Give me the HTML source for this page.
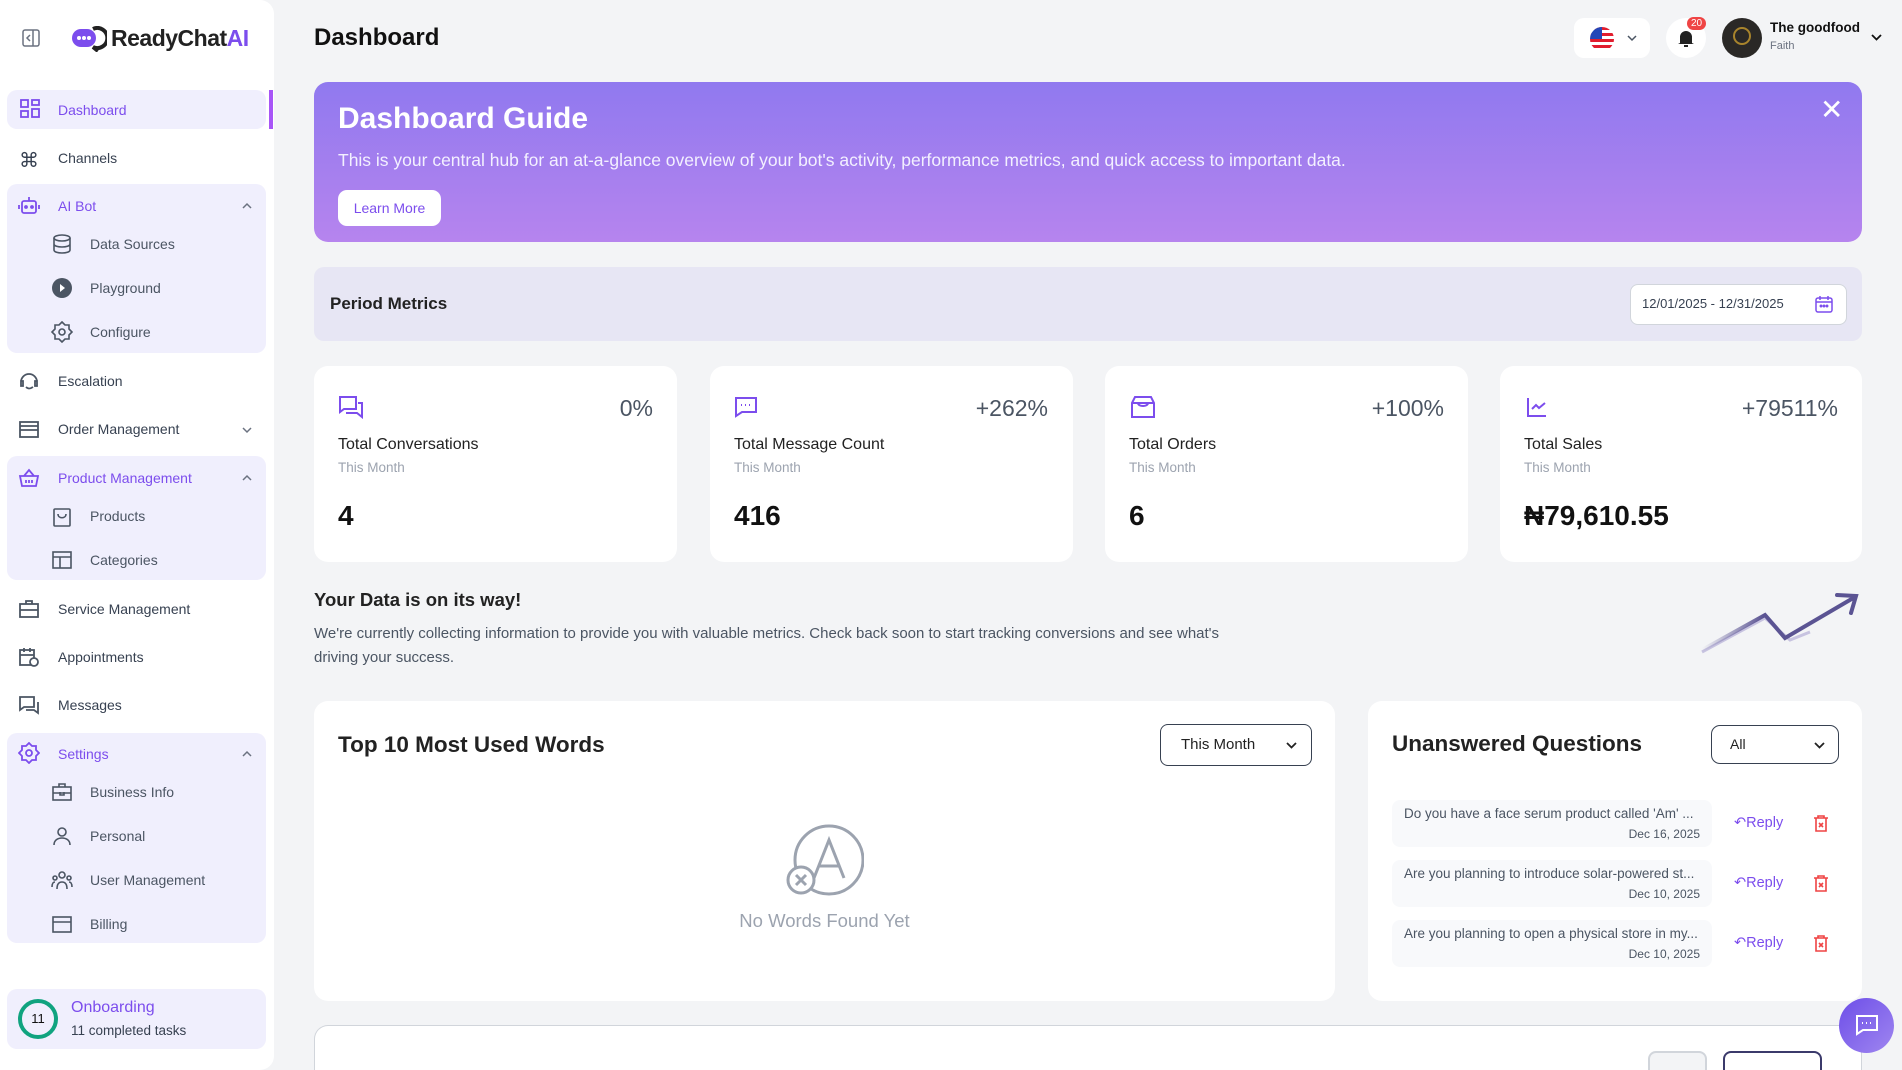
<!DOCTYPE html>
<html><head><meta charset="utf-8"><style>
*{box-sizing:border-box;margin:0;padding:0}
html{width:1902px;height:1070px;overflow:hidden}
body{width:1902px;height:1070px;overflow:hidden;background:#f3f4f6;font-family:"Liberation Sans",sans-serif;color:#1f2937;position:relative}
.a{position:absolute}
.sb{left:0;top:0;width:274px;height:1070px;background:#fff;border-radius:0 14px 14px 0}
.grp{left:7px;width:259px;background:#f0effd;border-radius:10px}
.it{left:58px;font-size:14px;color:#374151;transform:translateY(-50%)}
.sub{left:90px;font-size:14px;color:#4b5563;transform:translateY(-50%)}
.ic{width:22px;height:22px;transform:translateY(-50%)}
.pur{color:#7c4ded}
.card{background:#fff;border-radius:14px}
</style></head><body>
<div class="a sb"></div>
<!-- logo -->
<svg class="a" style="left:22px;top:29px" width="18" height="18" viewBox="0 0 18 18"><rect x="1" y="1" width="16" height="16" rx="2" fill="none" stroke="#6b7280" stroke-width="1.5"/><line x1="11" y1="1" x2="11" y2="17" stroke="#6b7280" stroke-width="1.5"/><path d="M8 6l-3 3 3 3" fill="none" stroke="#6b7280" stroke-width="1.5"/></svg>
<svg class="a" style="left:71px;top:26px" width="36" height="26" viewBox="0 0 36 26"><path d="M22 3a10 10 0 1 1 0 18l5 4" fill="none" stroke="#222" stroke-width="4"/><rect x="1" y="3" width="24" height="18" rx="9" fill="#7c4ded"/><circle cx="8" cy="12" r="2" fill="#fff"/><circle cx="13" cy="12" r="2" fill="#fff"/><circle cx="18" cy="12" r="2" fill="#fff"/></svg>
<div class="a" style="left:111px;top:25px;font-size:23px;font-weight:bold;color:#222;letter-spacing:-0.5px">ReadyChat<span style="color:#7c4ded">AI</span></div>
<!-- nav -->
<div class="a grp" style="top:90px;height:39px"></div>
<div class="a" style="left:269px;top:90px;width:4px;height:39px;background:#a855f7"></div>
<div class="a grp" style="top:184px;height:169px"></div>
<div class="a grp" style="top:456px;height:124px"></div>
<div class="a grp" style="top:733px;height:210px"></div>
<svg class="a ic" style="left:19px;top:109px" viewBox="0 0 22 22" fill="none" stroke="#7c4ded" stroke-width="1.8"><rect x="2" y="2" width="7" height="7"/><rect x="13" y="2" width="7" height="5"/><rect x="2" y="13" width="7" height="6"/><rect x="13" y="11" width="7" height="8"/></svg>
<div class="a it pur" style="top:110px">Dashboard</div>
<div class="a" style="left:19px;top:148px;font-size:20px;color:#374151">⌘</div>
<div class="a it" style="top:158px">Channels</div>
<svg class="a ic" style="left:18px;top:206px" viewBox="0 0 22 22" fill="none" stroke="#7c4ded" stroke-width="1.8"><rect x="4" y="6" width="14" height="12" rx="2"/><line x1="11" y1="2" x2="11" y2="6"/><line x1="1" y1="10" x2="1" y2="14"/><line x1="21" y1="10" x2="21" y2="14"/><circle cx="8" cy="12" r="1"/><circle cx="14" cy="12" r="1"/></svg>
<div class="a it pur" style="top:206px">AI Bot</div>
<svg class="a" style="left:241px;top:201px" width="12" height="10" viewBox="0 0 12 10"><path d="M2 7l4-4 4 4" fill="none" stroke="#6b7280" stroke-width="1.5"/></svg>
<svg class="a ic" style="left:51px;top:244px" viewBox="0 0 22 22" fill="none" stroke="#4b5563" stroke-width="1.6"><ellipse cx="11" cy="5" rx="8" ry="3"/><path d="M3 5v12c0 2 4 3 8 3s8-1 8-3V5M3 11c0 2 4 3 8 3s8-1 8-3"/></svg>
<div class="a sub" style="top:244px">Data Sources</div>
<svg class="a ic" style="left:51px;top:288px" viewBox="0 0 22 22"><circle cx="11" cy="11" r="10" fill="#4b5563"/><path d="M9 7l5 4-5 4z" fill="#fff"/></svg>
<div class="a sub" style="top:288px">Playground</div>
<svg class="a ic" style="left:51px;top:332px" viewBox="0 0 22 22" fill="none" stroke="#4b5563" stroke-width="1.6"><circle cx="11" cy="11" r="3"/><path d="M11 1l3 3h4v4l3 3-3 3v4h-4l-3 3-3-3H4v-4l-3-3 3-3V4h4z"/></svg>
<div class="a sub" style="top:332px">Configure</div>
<svg class="a ic" style="left:18px;top:381px" viewBox="0 0 22 22" fill="none" stroke="#4b5563" stroke-width="1.8"><path d="M3 12a8 8 0 0 1 16 0M3 11h2v5H3zM17 11h2v5h-2zM8 17c2 2 4 2 7 0"/></svg>
<div class="a it" style="top:381px">Escalation</div>
<svg class="a ic" style="left:18px;top:429px" viewBox="0 0 22 22" fill="none" stroke="#4b5563" stroke-width="1.8"><rect x="2" y="4" width="18" height="15"/><line x1="2" y1="8" x2="20" y2="8"/><line x1="2" y1="12" x2="20" y2="12"/></svg>
<div class="a it" style="top:429px">Order Management</div>
<svg class="a" style="left:241px;top:425px" width="12" height="10" viewBox="0 0 12 10"><path d="M2 3l4 4 4-4" fill="none" stroke="#6b7280" stroke-width="1.5"/></svg>
<svg class="a ic" style="left:18px;top:478px" viewBox="0 0 22 22" fill="none" stroke="#7c4ded" stroke-width="1.8"><path d="M2 9h18l-2 10H4zM6 9l5-6 5 6M8 13v3M11 13v3M14 13v3"/></svg>
<div class="a it pur" style="top:478px">Product Management</div>
<svg class="a" style="left:241px;top:473px" width="12" height="10" viewBox="0 0 12 10"><path d="M2 7l4-4 4 4" fill="none" stroke="#6b7280" stroke-width="1.5"/></svg>
<svg class="a ic" style="left:51px;top:517px" viewBox="0 0 22 22" fill="none" stroke="#4b5563" stroke-width="1.6"><rect x="3" y="3" width="16" height="17" rx="1"/><path d="M7 8c0 5 8 5 8 0"/></svg>
<div class="a sub" style="top:516px">Products</div>
<svg class="a ic" style="left:51px;top:560px" viewBox="0 0 22 22" fill="none" stroke="#4b5563" stroke-width="1.6"><rect x="2" y="3" width="18" height="16"/><line x1="2" y1="8" x2="20" y2="8"/><line x1="9" y1="8" x2="9" y2="19"/></svg>
<div class="a sub" style="top:560px">Categories</div>
<svg class="a ic" style="left:18px;top:609px" viewBox="0 0 22 22" fill="none" stroke="#4b5563" stroke-width="1.8"><rect x="2" y="6" width="18" height="13"/><path d="M8 6V3h6v3M2 12h18"/></svg>
<div class="a it" style="top:609px">Service Management</div>
<svg class="a ic" style="left:18px;top:657px" viewBox="0 0 22 22" fill="none" stroke="#4b5563" stroke-width="1.8"><rect x="2" y="4" width="14" height="15"/><path d="M6 2v4M12 2v4M2 9h14"/><circle cx="16" cy="16" r="4" fill="#fff"/></svg>
<div class="a it" style="top:657px">Appointments</div>
<svg class="a ic" style="left:18px;top:705px" viewBox="0 0 22 22" fill="none" stroke="#4b5563" stroke-width="1.8"><path d="M2 3h14v10H6l-4 3zM8 16h8l4 3V8"/></svg>
<div class="a it" style="top:705px">Messages</div>
<svg class="a ic" style="left:18px;top:753px" viewBox="0 0 22 22" fill="none" stroke="#7c4ded" stroke-width="1.8"><circle cx="11" cy="11" r="3"/><path d="M11 1l3 3h4v4l3 3-3 3v4h-4l-3 3-3-3H4v-4l-3-3 3-3V4h4z"/></svg>
<div class="a it pur" style="top:754px">Settings</div>
<svg class="a" style="left:241px;top:749px" width="12" height="10" viewBox="0 0 12 10"><path d="M2 7l4-4 4 4" fill="none" stroke="#6b7280" stroke-width="1.5"/></svg>
<svg class="a ic" style="left:51px;top:792px" viewBox="0 0 22 22" fill="none" stroke="#4b5563" stroke-width="1.6"><rect x="2" y="6" width="18" height="13"/><path d="M8 6V3h6v3M2 12h18M9 11v3h4v-3"/></svg>
<div class="a sub" style="top:792px">Business Info</div>
<svg class="a ic" style="left:51px;top:836px" viewBox="0 0 22 22" fill="none" stroke="#4b5563" stroke-width="1.6"><circle cx="11" cy="7" r="4"/><path d="M3 20c0-5 4-7 8-7s8 2 8 7"/></svg>
<div class="a sub" style="top:836px">Personal</div>
<svg class="a ic" style="left:51px;top:880px" viewBox="0 0 22 22" fill="none" stroke="#4b5563" stroke-width="1.6"><circle cx="11" cy="6" r="3"/><circle cx="4" cy="9" r="2"/><circle cx="18" cy="9" r="2"/><path d="M6 20c0-5 2-7 5-7s5 2 5 7M1 18c0-3 1-5 3-5M21 18c0-3-1-5-3-5"/></svg>
<div class="a sub" style="top:880px">User Management</div>
<svg class="a ic" style="left:51px;top:924px" viewBox="0 0 22 22" fill="none" stroke="#4b5563" stroke-width="1.6"><rect x="2" y="4" width="18" height="15"/><line x1="2" y1="9" x2="20" y2="9"/></svg>
<div class="a sub" style="top:924px">Billing</div>
<div class="a grp" style="top:989px;height:60px"></div>
<div class="a" style="left:18px;top:999px;width:40px;height:40px;border-radius:50%;border:4px solid #10a37f;font-size:13px;text-align:center;line-height:32px;color:#111">11</div>
<div class="a" style="left:71px;top:999px;font-size:16px;color:#7c4ded">Onboarding</div>
<div class="a" style="left:71px;top:1023px;font-size:13.5px;color:#374151">11 completed tasks</div>

<!-- header -->
<div class="a" style="left:314px;top:24px;font-size:24px;font-weight:bold;color:#111">Dashboard</div>
<div class="a" style="left:1574px;top:18px;width:76px;height:40px;background:#fff;border-radius:10px"></div>
<svg class="a" style="left:1590px;top:27px" width="24" height="24" viewBox="0 0 24 24"><clipPath id="c"><circle cx="12" cy="12" r="12"/></clipPath><g clip-path="url(#c)"><rect width="24" height="24" fill="#fff"/><rect y="0" width="24" height="3" fill="#e11d2e"/><rect y="6" width="24" height="3" fill="#e11d2e"/><rect y="12" width="24" height="3" fill="#e11d2e"/><rect y="18" width="24" height="3" fill="#e11d2e"/><rect width="12" height="12" fill="#2447b8"/></g></svg>
<svg class="a" style="left:1626px;top:33px" width="12" height="10" viewBox="0 0 12 10"><path d="M2 3l4 4 4-4" fill="none" stroke="#4b5563" stroke-width="1.5"/></svg>
<div class="a" style="left:1666px;top:18px;width:40px;height:40px;background:#fff;border-radius:50%"></div>
<svg class="a" style="left:1677px;top:28px" width="18" height="20" viewBox="0 0 18 20"><path d="M3 15V9a6 6 0 0 1 12 0v6l2 1H1z" fill="#222"/><rect x="7" y="17" width="4" height="2" fill="#222"/></svg>
<div class="a" style="left:1687px;top:17px;background:#ef4444;color:#fff;font-size:10px;border-radius:9px;padding:1px 4px">20</div>
<div class="a" style="left:1722px;top:18px;width:40px;height:40px;background:#2a2826;border-radius:50%"></div>
<div class="a" style="left:1733px;top:27px;width:18px;height:18px;border-radius:50%;border:2px solid #a8842c"></div>
<div class="a" style="left:1770px;top:20px;font-size:13.5px;font-weight:bold;color:#111">The goodfood</div>
<div class="a" style="left:1770px;top:40px;font-size:11px;color:#6b7280">Faith</div>
<svg class="a" style="left:1870px;top:32px" width="13" height="10" viewBox="0 0 13 10"><path d="M2 3l4.5 4.5L11 3" fill="none" stroke="#111" stroke-width="1.8"/></svg>

<!-- banner -->
<div class="a" style="left:314px;top:82px;width:1548px;height:160px;border-radius:14px;background:linear-gradient(180deg,#9079ef,#b684ee)"></div>
<div class="a" style="left:338px;top:102px;font-size:30px;font-weight:bold;color:#fff">Dashboard Guide</div>
<div class="a" style="left:338px;top:150px;font-size:17.5px;color:#f3f0ff">This is your central hub for an at-a-glance overview of your bot's activity, performance metrics, and quick access to important data.</div>
<div class="a" style="left:338px;top:190px;width:103px;height:36px;background:#fff;border-radius:9px;color:#7c4ded;font-size:14px;text-align:center;line-height:36px">Learn More</div>
<div class="a" style="left:1820px;top:96px;font-size:28px;color:#fff;line-height:1">✕</div>

<!-- period -->
<div class="a" style="left:314px;top:267px;width:1548px;height:74px;border-radius:10px;background:#e7e6f4"></div>
<div class="a" style="left:330px;top:294px;font-size:17px;font-weight:bold;color:#222">Period Metrics</div>
<div class="a" style="left:1630px;top:284px;width:217px;height:41px;background:#fff;border:1px solid #d1d5db;border-radius:8px"></div>
<div class="a" style="left:1642px;top:296px;font-size:13px;color:#374151">12/01/2025 - 12/31/2025</div>
<svg class="a" style="left:1815px;top:295px" width="18" height="18" viewBox="0 0 18 18" fill="none" stroke="#7c4ded" stroke-width="1.5"><rect x="1" y="3" width="16" height="14" rx="2"/><path d="M1 7h16M5 1v4M13 1v4"/><circle cx="6" cy="11" r=".7"/><circle cx="9" cy="11" r=".7"/><circle cx="12" cy="11" r=".7"/></svg>

<!-- cards -->
<div class="a card" style="left:314px;top:366px;width:363px;height:196px"></div>
<div class="a card" style="left:710px;top:366px;width:363px;height:196px"></div>
<div class="a card" style="left:1105px;top:366px;width:363px;height:196px"></div>
<div class="a card" style="left:1500px;top:366px;width:362px;height:196px"></div>
<svg class="a" style="left:338px;top:395px" width="26" height="24" viewBox="0 0 26 24" fill="none" stroke="#7c4ded" stroke-width="2"><path d="M2 2h16v12H6l-4 3zM8 18h11l5 4V8h-4"/></svg>
<svg class="a" style="left:734px;top:396px" width="24" height="22" viewBox="0 0 24 22" fill="none" stroke="#7c4ded" stroke-width="2"><path d="M2 2h20v14H8l-6 4z"/><path d="M7 9h1M11 9h1M15 9h1"/></svg>
<svg class="a" style="left:1130px;top:395px" width="26" height="24" viewBox="0 0 26 24" fill="none" stroke="#7c4ded" stroke-width="2"><path d="M2 8l3-6h16l3 6v14H2zM2 8h22M8 8c0 4 10 4 10 0"/></svg>
<svg class="a" style="left:1526px;top:396px" width="22" height="22" viewBox="0 0 22 22" fill="none" stroke="#7c4ded" stroke-width="2"><path d="M2 2v18h18M6 13l4-4 3 3 6-5"/></svg>
<div class="a" style="left:560px;top:395px;width:93px;text-align:right;font-size:23px;color:#4b5563">0%</div>
<div class="a" style="left:900px;top:395px;width:148px;text-align:right;font-size:23px;color:#4b5563">+262%</div>
<div class="a" style="left:1300px;top:395px;width:144px;text-align:right;font-size:23px;color:#4b5563">+100%</div>
<div class="a" style="left:1690px;top:395px;width:148px;text-align:right;font-size:23px;color:#4b5563">+79511%</div>
<div class="a" style="left:338px;top:436px;font-size:16px;color:#222">Total Conversations</div>
<div class="a" style="left:734px;top:436px;font-size:16px;color:#222">Total Message Count</div>
<div class="a" style="left:1129px;top:436px;font-size:16px;color:#222">Total Orders</div>
<div class="a" style="left:1524px;top:436px;font-size:16px;color:#222">Total Sales</div>
<div class="a" style="left:338px;top:460px;font-size:13.5px;color:#9ca3af">This Month</div>
<div class="a" style="left:734px;top:460px;font-size:13.5px;color:#9ca3af">This Month</div>
<div class="a" style="left:1129px;top:460px;font-size:13.5px;color:#9ca3af">This Month</div>
<div class="a" style="left:1524px;top:460px;font-size:13.5px;color:#9ca3af">This Month</div>
<div class="a" style="left:338px;top:500px;font-size:28px;font-weight:bold;color:#111">4</div>
<div class="a" style="left:734px;top:500px;font-size:28px;font-weight:bold;color:#111">416</div>
<div class="a" style="left:1129px;top:500px;font-size:28px;font-weight:bold;color:#111">6</div>
<div class="a" style="left:1524px;top:500px;font-size:28px;font-weight:bold;color:#111">₦79,610.55</div>

<!-- data on way -->
<div class="a" style="left:314px;top:589px;font-size:18.5px;font-weight:bold;color:#222">Your Data is on its way!</div>
<div class="a" style="left:314px;top:622px;width:940px;font-size:15px;line-height:24px;color:#4b5563">We're currently collecting information to provide you with valuable metrics. Check back soon to start tracking conversions and see what's driving your success.</div>
<svg class="a" style="left:1700px;top:590px" width="160" height="70" viewBox="0 0 160 70"><defs><linearGradient id="g" x1="0" x2="1"><stop offset="0" stop-color="#5b5493" stop-opacity="0"/><stop offset=".4" stop-color="#5b5493"/></linearGradient></defs><path d="M2 62L65 28l25 22 20-8" fill="none" stroke="#c7c3e0" stroke-width="3"/><path d="M2 60L65 25l20 23L155 7M137 5l19 1-5 17" fill="none" stroke="url(#g)" stroke-width="4" stroke-linecap="round"/></svg>

<!-- words card -->
<div class="a card" style="left:314px;top:701px;width:1021px;height:300px"></div>
<div class="a" style="left:338px;top:732px;font-size:22.5px;font-weight:bold;color:#222">Top 10 Most Used Words</div>
<div class="a" style="left:1160px;top:724px;width:152px;height:42px;border:1px solid #374151;border-radius:8px;font-size:15px;color:#222;padding:11px 0 0 20px">This Month</div>
<svg class="a" style="left:1285px;top:740px" width="13" height="10" viewBox="0 0 13 10"><path d="M2 3l4.5 4.5L11 3" fill="none" stroke="#222" stroke-width="1.8"/></svg>
<svg class="a" style="left:784px;top:823px" width="80" height="74" viewBox="0 0 80 74" fill="none" stroke="#9ca3af" stroke-width="3"><circle cx="45" cy="37" r="34"/><path d="M30 55l15-38 15 38M35 43h20" /><circle cx="17" cy="57" r="13" fill="#fff"/><path d="M12 52l10 10M22 52l-10 10"/></svg>
<div class="a" style="left:314px;top:910px;width:1021px;text-align:center;font-size:18.5px;color:#9ca3af">No Words Found Yet</div>

<!-- unanswered -->
<div class="a card" style="left:1368px;top:701px;width:494px;height:300px"></div>
<div class="a" style="left:1392px;top:731px;font-size:22.5px;font-weight:bold;color:#222">Unanswered Questions</div>
<div class="a" style="left:1711px;top:725px;width:128px;height:39px;border:1px solid #374151;border-radius:9px;font-size:14px;color:#222;padding:10px 0 0 18px">All</div>
<svg class="a" style="left:1813px;top:740px" width="13" height="10" viewBox="0 0 13 10"><path d="M2 3l4.5 4.5L11 3" fill="none" stroke="#222" stroke-width="1.8"/></svg>
<div class="a" style="left:1392px;top:800px;width:320px;height:47px;background:#f8f9fb;border-radius:8px"></div>
<div class="a" style="left:1392px;top:860px;width:320px;height:47px;background:#f8f9fb;border-radius:8px"></div>
<div class="a" style="left:1392px;top:920px;width:320px;height:47px;background:#f8f9fb;border-radius:8px"></div>
<div class="a" style="left:1404px;top:806px;font-size:13.5px;color:#4b5563">Do you have a face serum product called 'Am' ...</div>
<div class="a" style="left:1404px;top:866px;font-size:13.5px;color:#4b5563">Are you planning to introduce solar-powered st...</div>
<div class="a" style="left:1404px;top:926px;font-size:13.5px;color:#4b5563">Are you planning to open a physical store in my...</div>
<div class="a" style="left:1600px;top:827px;width:100px;text-align:right;font-size:12px;color:#4b5563">Dec 16, 2025</div>
<div class="a" style="left:1600px;top:887px;width:100px;text-align:right;font-size:12px;color:#4b5563">Dec 10, 2025</div>
<div class="a" style="left:1600px;top:947px;width:100px;text-align:right;font-size:12px;color:#4b5563">Dec 10, 2025</div>
<div class="a" style="left:1734px;top:815px;font-size:14.5px;color:#7c4ded">↶Reply</div>
<div class="a" style="left:1734px;top:875px;font-size:14.5px;color:#7c4ded">↶Reply</div>
<div class="a" style="left:1734px;top:935px;font-size:14.5px;color:#7c4ded">↶Reply</div>
<svg class="a" style="left:1813px;top:815px" width="16" height="17" viewBox="0 0 16 17" fill="none" stroke="#ef4444" stroke-width="1.6"><path d="M1 3h14M5 3V1h6v2M3 3v13h10V3M6 8l4 4M10 8l-4 4"/></svg>
<svg class="a" style="left:1813px;top:875px" width="16" height="17" viewBox="0 0 16 17" fill="none" stroke="#ef4444" stroke-width="1.6"><path d="M1 3h14M5 3V1h6v2M3 3v13h10V3M6 8l4 4M10 8l-4 4"/></svg>
<svg class="a" style="left:1813px;top:935px" width="16" height="17" viewBox="0 0 16 17" fill="none" stroke="#ef4444" stroke-width="1.6"><path d="M1 3h14M5 3V1h6v2M3 3v13h10V3M6 8l4 4M10 8l-4 4"/></svg>

<!-- bottom card -->
<div class="a" style="left:314px;top:1025px;width:1548px;height:60px;background:#fff;border:1px solid #d1d5db;border-bottom:none;border-radius:14px 14px 0 0"></div>
<div class="a" style="left:1648px;top:1051px;width:59px;height:30px;background:#f3f4f6;border:2px solid #d1d5db;border-bottom:none;border-radius:8px 8px 0 0"></div>
<div class="a" style="left:1723px;top:1051px;width:99px;height:30px;border:2px solid #3b3a6b;border-bottom:none;border-radius:8px 8px 0 0"></div>
<!-- chat fab -->
<div class="a" style="left:1839px;top:998px;width:55px;height:55px;border-radius:50%;background:linear-gradient(135deg,#6d4ee8,#9f86f0)"></div>
<svg class="a" style="left:1855px;top:1014px" width="24" height="22" viewBox="0 0 24 22" fill="none" stroke="#fff" stroke-width="2"><path d="M2 2h20v14H8l-6 4z"/><path d="M7 9h1M11 9h1M15 9h1"/></svg>
</body></html>
